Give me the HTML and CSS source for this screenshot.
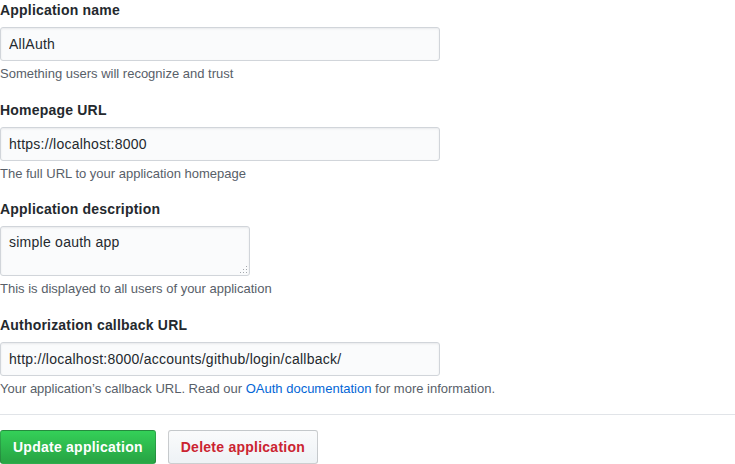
FILE: index.html
```html
<!DOCTYPE html>
<html>
<head>
<meta charset="utf-8">
<link rel="stylesheet" href="styles.css">
</head>
<body>
<form class="form">
  <dl class="group">
    <dt><label class="label">Application name</label></dt>
    <dd>
      <input class="input" type="text" value="AllAuth">
      <p class="note">Something users will recognize and trust</p>
    </dd>
  </dl>
  <dl class="group">
    <dt><label class="label">Homepage URL</label></dt>
    <dd>
      <input class="input" type="text" value="https://localhost:8000">
      <p class="note">The full URL to your application homepage</p>
    </dd>
  </dl>
  <dl class="group">
    <dt><label class="label">Application description</label></dt>
    <dd>
      <textarea class="input textarea">simple oauth app</textarea>
      <p class="note">This is displayed to all users of your application</p>
    </dd>
  </dl>
  <dl class="group">
    <dt><label class="label">Authorization callback URL</label></dt>
    <dd>
      <input class="input" type="text" value="http://localhost:8000/accounts/github/login/callback/">
      <p class="note">Your application’s callback URL. Read our <a class="link" href="#">OAuth documentation</a> for more information.</p>
    </dd>
  </dl>
  <hr class="rule">
  <div class="actions">
    <button type="button" class="btn btn-primary">Update application</button>
    <button type="button" class="btn btn-danger">Delete application</button>
  </div>
</form>
</body>
</html>
```
FILE: styles.css
```css
html, body {
  margin: 0;
  padding: 0;
  background: #fff;
}
body {
  font-family: "Liberation Sans", Arial, Helvetica, sans-serif;
  font-size: 14px;
  line-height: 1.5;
  color: #24292e;
}
.form {
  width: 735px;
}
.group {
  margin: 0 0 16.5px 0;
}
.group dt {
  margin: 0 0 7px 0;
  height: 20px;
}
.group dd {
  margin: 0;
}
.label {
  font-weight: bold;
  font-size: 14px;
  line-height: 20px;
  letter-spacing: 0.2px;
  display: block;
}
.input {
  display: block;
  box-sizing: border-box;
  width: 440px;
  height: 34px;
  margin: 0;
  padding: 6px 8px;
  font-family: inherit;
  font-size: 14px;
  line-height: 20px;
  letter-spacing: 0.25px;
  color: #24292e;
  background: #fafbfc;
  border: 1px solid #d1d5da;
  border-radius: 3px;
  box-shadow: inset 0 1px 2px rgba(27,31,35,.075);
  outline: none;
}
.textarea {
  width: 250px;
  height: 50px;
  resize: none;
  padding-top: 5px;
  background-color: #fafbfc;
  background-image:
    radial-gradient(circle, #a3a8ad 0.9px, transparent 1px),
    radial-gradient(circle, #a3a8ad 0.9px, transparent 1px),
    radial-gradient(circle, #a3a8ad 0.9px, transparent 1px),
    radial-gradient(circle, #a3a8ad 0.9px, transparent 1px),
    radial-gradient(circle, #a3a8ad 0.9px, transparent 1px),
    radial-gradient(circle, #a3a8ad 0.9px, transparent 1px);
  background-size: 3px 3px;
  background-repeat: no-repeat;
  background-position:
    right 1px bottom 1px,
    right 4px bottom 1px,
    right 7px bottom 1px,
    right 1px bottom 4px,
    right 4px bottom 4px,
    right 1px bottom 7px;
}
.note {
  margin: 4px 0 2px;
  font-size: 13px;
  line-height: 18px;
  color: #586069;
}
.link {
  color: #0366d6;
  text-decoration: none;
}
.rule {
  margin: 16px 0 15px;
  height: 0;
  border: 0;
  border-top: 1px solid #e1e4e8;
}
.actions {
  display: flex;
  gap: 12px;
}
.btn {
  box-sizing: border-box;
  height: 34px;
  padding: 6px 12px;
  font-family: inherit;
  font-size: 14px;
  font-weight: bold;
  line-height: 20px;
  letter-spacing: 0.25px;
  border: 1px solid rgba(27,31,35,.2);
  border-radius: 3px;
  cursor: pointer;
}
.btn-primary {
  color: #fff;
  background: linear-gradient(-180deg, #34d058 0%, #28a745 90%);
}
.btn-danger {
  color: #cb2431;
  background: linear-gradient(-180deg, #fafbfc 0%, #eff3f6 90%);
}
```
